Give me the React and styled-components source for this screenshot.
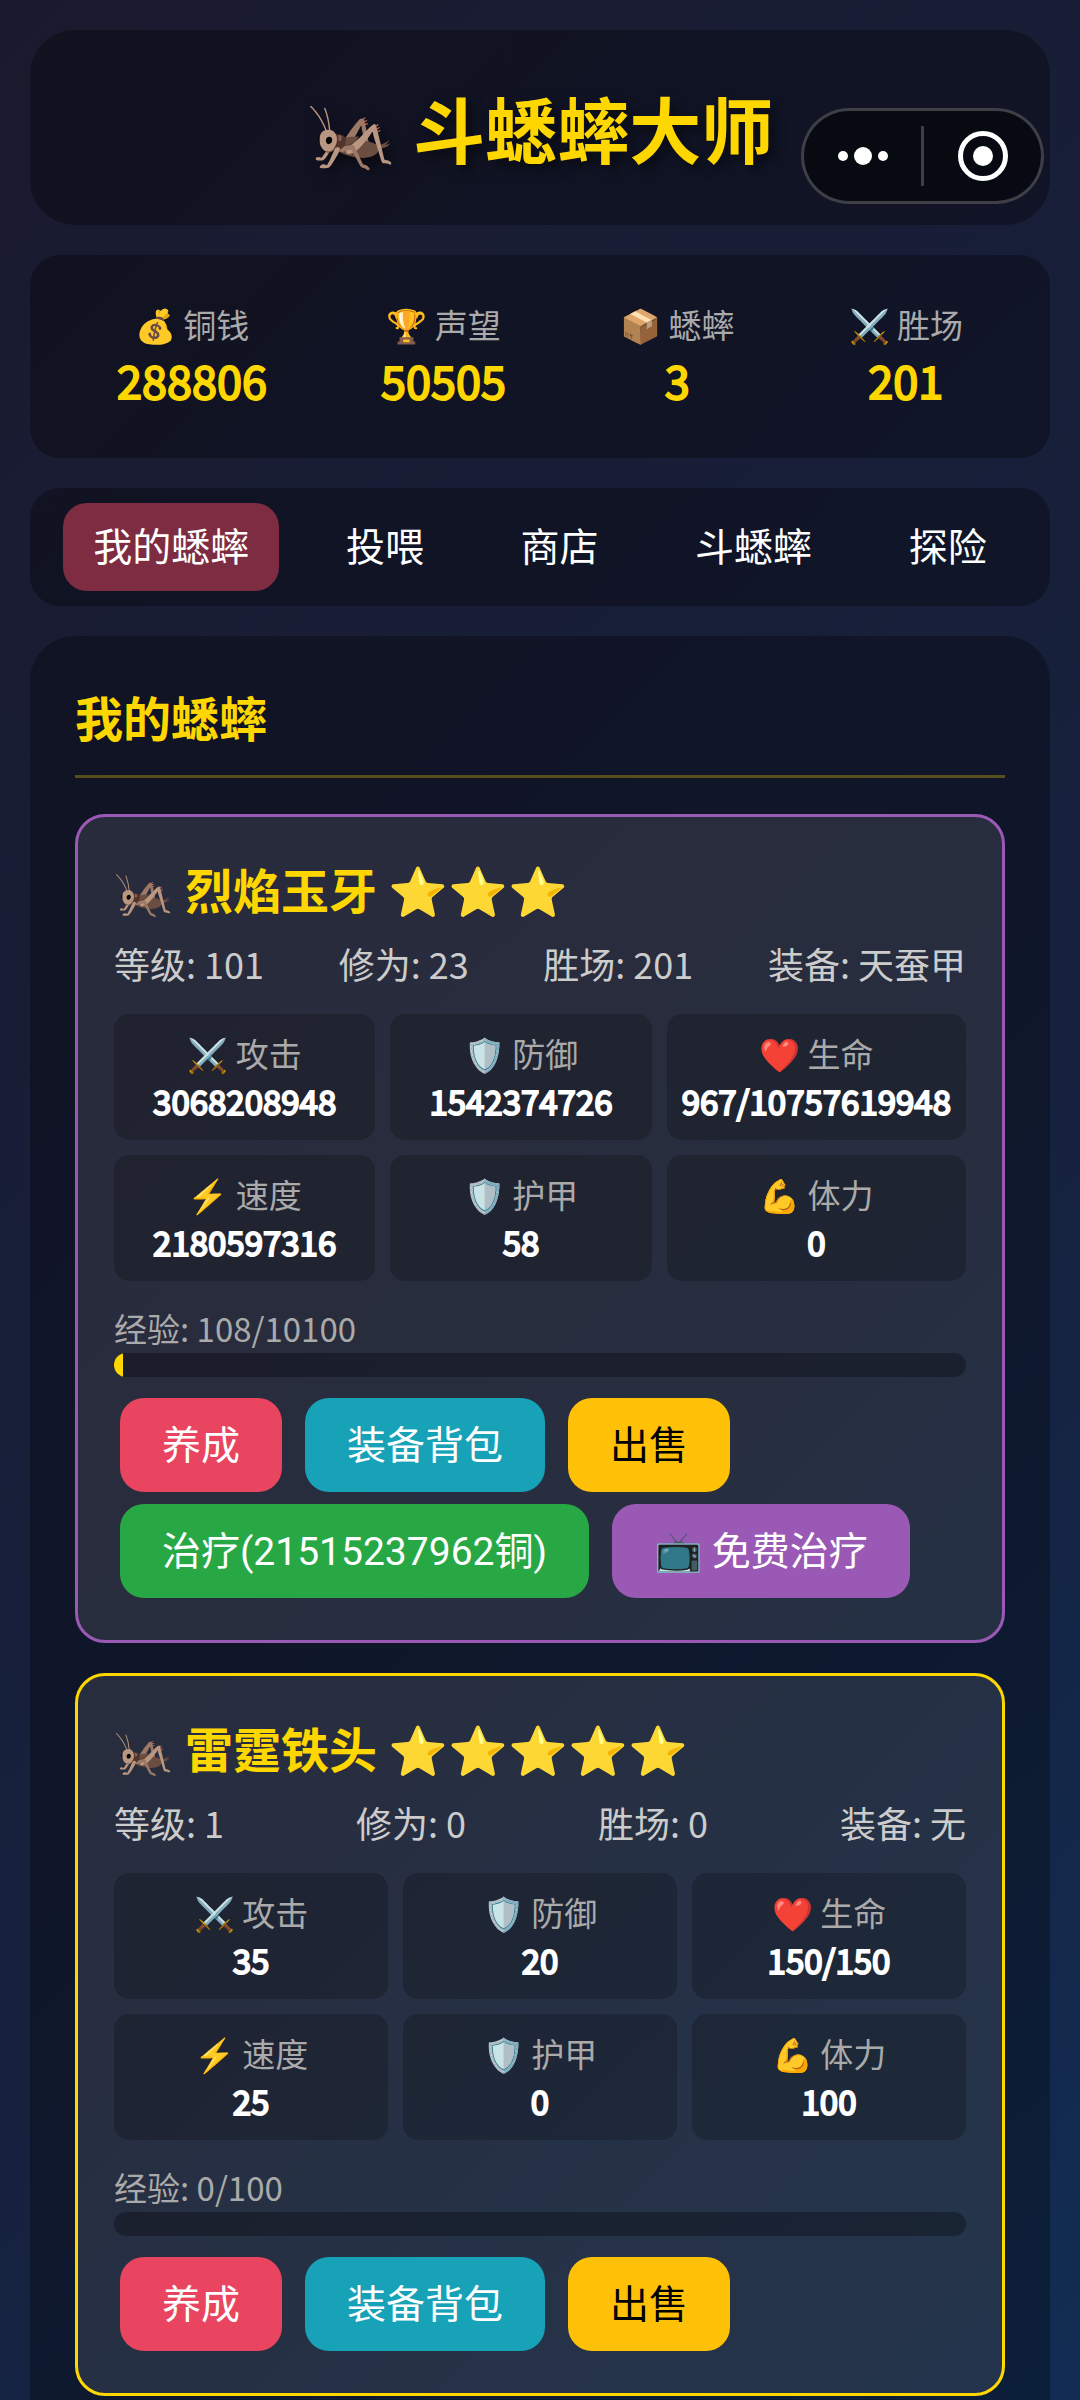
import styled, { createGlobalStyle } from "styled-components";

const GlobalStyle = createGlobalStyle`
    * {
        box-sizing: border-box;
        margin: 0;
        padding: 0;
    }

    body {
        font-family: "Noto Sans CJK SC", sans-serif;
        color: #fff;
        background: #1a1a2e;
    }
`;

const Page = styled.div`
    display: flex;
    flex-direction: column;
    gap: 30px;
    height: 100vh;
    padding: 30px;
    overflow-y: auto;
    scrollbar-width: none;
    background: linear-gradient(135deg, #1a1a2e 0%, #16213e 50%, #0f3460 100%) 0 0 / 100% 3200px;
`;

const Panel = styled.div`
    flex-shrink: 0;
    background: rgba(0, 0, 0, 0.3);
    border-radius: 30px;
`;

const Header = styled(Panel)`
    padding: 44px 45px 46px;
    border-radius: 45px;
    text-align: center;
`;

const Title = styled.h1`
    font-size: 72px;
    line-height: 105px;
    font-weight: 700;
    color: #ffd700;
    text-shadow: 6px 6px 12px rgba(0, 0, 0, 0.5);
`;

const Capsule = styled.div`
    position: fixed;
    top: 108px;
    right: 36px;
    display: flex;
    align-items: center;
    width: 243px;
    height: 96px;
    background: rgba(0, 0, 0, 0.5);
    border: 3px solid rgba(255, 255, 255, 0.22);
    border-radius: 48px;
`;

const CapsuleButton = styled.button`
    display: flex;
    flex: 1;
    align-items: center;
    justify-content: center;
    height: 60px;
    background: none;
    border: none;

    & + & {
        border-left: 3px solid rgba(255, 255, 255, 0.22);
    }
`;

const Stats = styled(Panel)`
    display: flex;
    justify-content: space-around;
    padding: 45px 30px 47px;
`;

const Stat = styled.div`
    text-align: center;
`;

const Label = styled.div`
    font-size: 33px;
    line-height: 49px;
    color: #aaa;
`;

const StatValue = styled.div`
    font-size: 45px;
    line-height: 62px;
    color: #ffd700;
    -webkit-text-stroke: 2px currentColor;
`;

const Nav = styled(Panel).attrs({ as: "nav" })`
    display: flex;
    justify-content: space-around;
    padding: 15px;
`;

const Tab = styled.button`
    padding: 12px 30px 18px;
    font-family: inherit;
    font-size: 39px;
    line-height: 58px;
    color: #fff;
    background: ${({ $active }) => ($active ? "rgba(233, 69, 96, 0.5)" : "none")};
    border: none;
    border-radius: 24px;
`;

const Section = styled(Panel).attrs({ as: "main" })`
    padding: 45px;
    border-radius: 45px;
`;

const SectionTitle = styled.h2`
    margin-bottom: 36px;
    padding-bottom: 24px;
    font-size: 48px;
    line-height: 70px;
    font-weight: 700;
    color: #ffd700;
    border-bottom: 3px solid rgba(255, 215, 0, 0.3);
`;

const Card = styled.article`
    margin-bottom: 30px;
    padding: 36px;
    background: rgba(255, 255, 255, 0.1);
    border: 3px solid ${({ $color }) => $color};
    border-radius: 30px;
`;

const Name = styled.h3`
    font-size: 48px;
    line-height: 70px;
    font-weight: 700;
    color: #ffd700;
`;

const Info = styled.div`
    display: flex;
    justify-content: space-between;
    padding: 14px 0 24px;
    font-size: 36px;
    line-height: 53px;
    color: #ccc;
`;

const Grid = styled.div`
    display: grid;
    grid-template-columns: repeat(3, 1fr);
    gap: 15px;
    margin-bottom: 23px;
`;

const Cell = styled.div`
    padding: 15px 15px 16px;
    text-align: center;
    background: rgba(0, 0, 0, 0.2);
    border-radius: 15px;
`;

const CellValue = styled.div`
    font-size: 33px;
    line-height: 46px;
    -webkit-text-stroke: 2px currentColor;
`;

const Bar = styled.div`
    height: 24px;
    margin-bottom: 21px;
    overflow: hidden;
    background: rgba(0, 0, 0, 0.3);
    border-radius: 12px;
`;

const BarFill = styled.div`
    height: 100%;
    background: #ffd700;
`;

const Actions = styled.div`
    display: flex;
    flex-wrap: wrap;
    gap: 12px 23px;
    padding: 0 6px 6px;
`;

const Button = styled.button`
    padding: 15px 42px 21px;
    font-family: inherit;
    font-size: 39px;
    line-height: 58px;
    color: ${({ $dark }) => ($dark ? "#000" : "#fff")};
    background: ${({ $color }) => $color};
    border: none;
    border-radius: 24px;
`;

const Price = styled.span`
    font-family: Roboto, "Noto Sans CJK SC", sans-serif;
    line-height: 1;
`;

const stats = [
    ["💰 铜钱", 288806],
    ["🏆 声望", 50505],
    ["📦 蟋蟀", 3],
    ["⚔️ 胜场", 201],
];

const tabs = ["我的蟋蟀", "投喂", "商店", "斗蟋蟀", "探险"];

const crickets = [
    {
        name: "烈焰玉牙",
        stars: 3,
        color: "#9b59b6",
        info: ["等级: 101", "修为: 23", "胜场: 201", "装备: 天蚕甲"],
        values: ["3068208948", "1542374726", "967/10757619948", "2180597316", "58", "0"],
        exp: 108,
        expMax: 10100,
        heal: 21515237962,
    },
    {
        name: "雷霆铁头",
        stars: 5,
        color: "#ffd700",
        info: ["等级: 1", "修为: 0", "胜场: 0", "装备: 无"],
        values: ["35", "20", "150/150", "25", "0", "100"],
        exp: 0,
        expMax: 100,
    },
];

const labels = ["⚔️ 攻击", "🛡️ 防御", "❤️ 生命", "⚡ 速度", "🛡️ 护甲", "💪 体力"];

const Cricket = ({ cricket }) => {
    return (
        <Card $color={cricket.color}>
            <Name>🦗 {cricket.name} {"⭐".repeat(cricket.stars)}</Name>
            <Info>
                {cricket.info.map((text) => <span key={text}>{text}</span>)}
            </Info>
            <Grid>
                {labels.map((label, i) => (
                    <Cell key={label}>
                        <Label>{label}</Label>
                        <CellValue>{cricket.values[i]}</CellValue>
                    </Cell>
                ))}
            </Grid>
            <Label>经验: {cricket.exp}/{cricket.expMax}</Label>
            <Bar>
                <BarFill style={{ width: `${(cricket.exp / cricket.expMax) * 100}%` }} />
            </Bar>
            <Actions>
                <Button $color="#e94560">养成</Button>
                <Button $color="#17a2b8">装备背包</Button>
                <Button $color="#ffc107" $dark>出售</Button>
                {cricket.heal && (
                    <>
                        <Button $color="#28a745"><Price>治疗({cricket.heal}铜)</Price></Button>
                        <Button $color="#9b59b6">📺 免费治疗</Button>
                    </>
                )}
            </Actions>
        </Card>
    )
}

const App = () => {
    return (
        <>
            <GlobalStyle />
            <Page>
                <Header as="header">
                    <Title>🦗 斗蟋蟀大师</Title>
                </Header>
                <Stats>
                    {stats.map(([label, value]) => (
                        <Stat key={label}>
                            <Label>{label}</Label>
                            <StatValue>{value}</StatValue>
                        </Stat>
                    ))}
                </Stats>
                <Nav>
                    {tabs.map((tab, i) => <Tab key={tab} $active={i === 0}>{tab}</Tab>)}
                </Nav>
                <Section>
                    <SectionTitle>我的蟋蟀</SectionTitle>
                    {crickets.map((cricket) => <Cricket key={cricket.name} cricket={cricket} />)}
                </Section>
            </Page>
            <Capsule>
                <CapsuleButton aria-label="更多">
                    <svg width="50" height="18" viewBox="0 0 50 18" fill="#fff">
                        <circle cx="5" cy="9" r="5" />
                        <circle cx="25" cy="9" r="9" />
                        <circle cx="45" cy="9" r="5" />
                    </svg>
                </CapsuleButton>
                <CapsuleButton aria-label="关闭">
                    <svg width="50" height="50" viewBox="0 0 50 50">
                        <circle cx="25" cy="25" r="22.5" fill="none" stroke="#fff" strokeWidth="5" />
                        <circle cx="25" cy="25" r="10" fill="#fff" />
                    </svg>
                </CapsuleButton>
            </Capsule>
        </>
    )
}

export default App;
